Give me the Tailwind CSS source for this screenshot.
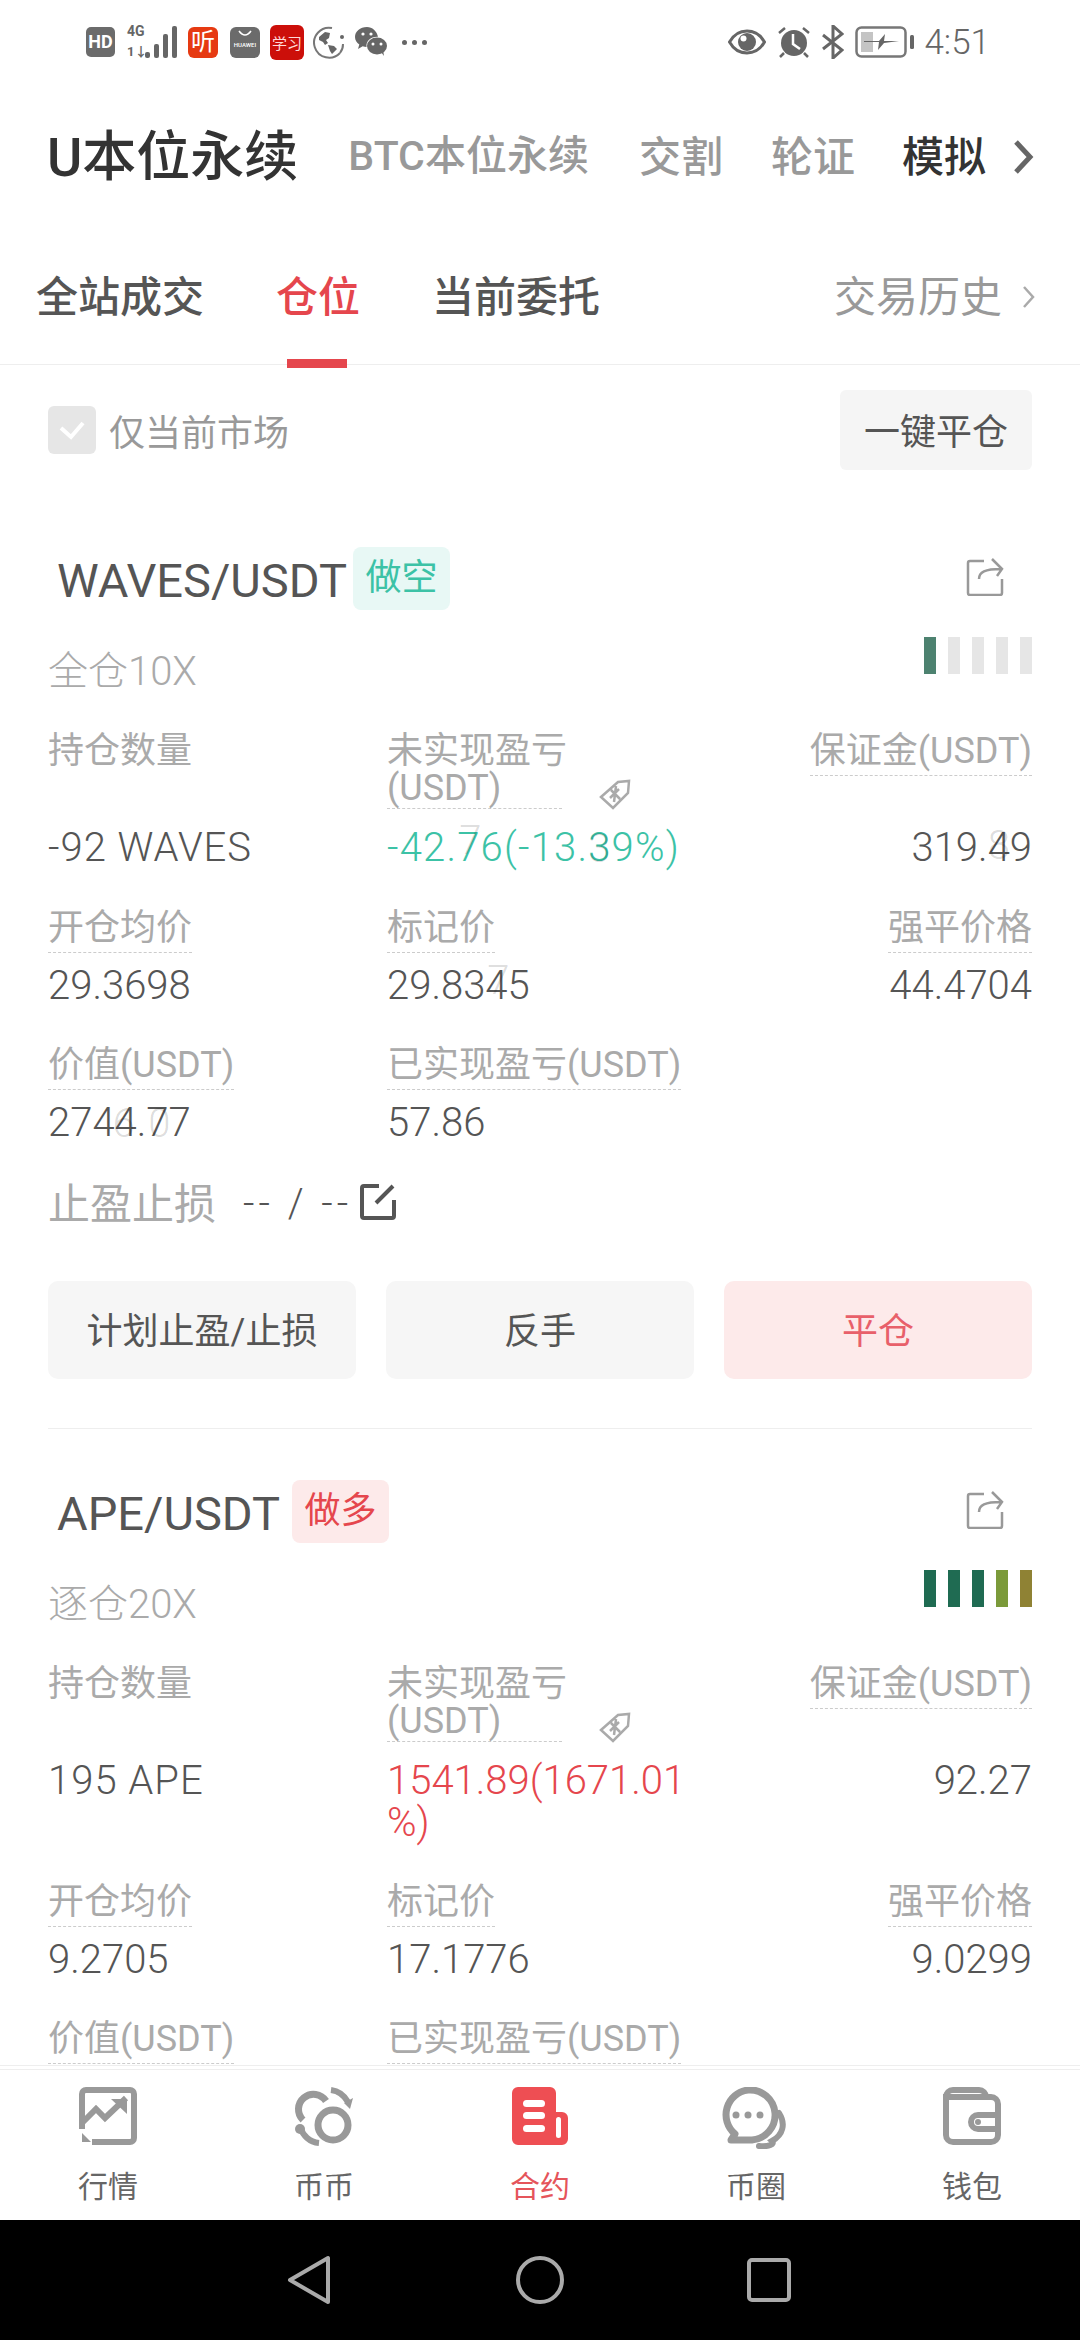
<!DOCTYPE html>
<html lang="zh-CN">
<head>
<meta charset="UTF-8">
<meta name="viewport" content="width=device-width, initial-scale=1.0">
<title>U本位永续</title>
<script src="https://cdn.jsdelivr.net/npm/@tailwindcss/browser@4"></script>
</head>
<body class="bg-white font-['Roboto','Noto_Sans_CJK_SC',sans-serif]">
<div class="w-[1080px] h-[2340px] flex flex-col overflow-hidden">

  <!-- status bar -->
  <div class="h-[84px] shrink-0 relative text-[#666]">
    <div class="flex items-center h-full pl-[86px]">
      <div class="w-[29px] h-[30px] rounded-[5px] bg-[#6b6b6b] text-white text-[18px] font-bold leading-[30px] text-center">HD</div>
      <div class="ml-[12px] flex items-end h-[32px] w-[50px] relative">
        <span class="absolute left-0 top-[-2px] text-[14px] font-bold leading-[15px] text-[#666]">4G</span>
        <span class="absolute left-0 bottom-[-1px] text-[13px] font-bold leading-[14px] text-[#666]">1↓</span>
        <svg class="absolute right-0 bottom-0" width="32" height="32" viewBox="0 0 32 32"><g fill="#666"><rect x="0" y="26" width="5" height="6" rx="2"/><rect x="9" y="18" width="5" height="14" rx="2"/><rect x="18" y="8" width="5" height="24" rx="2"/><rect x="27" y="0" width="5" height="32" rx="2"/></g></svg>
      </div>
      <div class="ml-[11px] w-[30px] h-[31px] rounded-[6px] bg-[#e63a12] text-white text-[24px] leading-[31px] text-center">听</div>
      <div class="ml-[12px] w-[30px] h-[31px] rounded-[6px] bg-[#6b6b6b] relative overflow-hidden">
        <svg class="absolute left-[8px] top-[3px]" width="14" height="8" viewBox="0 0 14 8"><path d="M1 1q6 8 12 0" fill="none" stroke="#fff" stroke-width="1.5"/></svg>
        <span class="absolute left-0 right-0 top-[14px] text-center text-[6px] leading-[8px] text-white font-medium">HUAWEI</span>
      </div>
      <div class="ml-[10px] w-[34px] h-[35px] rounded-[6px] bg-[#cc0f0a] text-[#ffd9d9] text-[15px] leading-[35px] text-center font-['Noto_Sans_CJK_SC']">学习</div>
      <svg class="ml-[9px]" width="32" height="33" viewBox="0 0 32 33">
        <path d="M27 27A15 15 0 1 1 19 2" fill="none" stroke="#777" stroke-width="2"/>
        <path d="M30 18a14 14 0 0 1-3 9" fill="none" stroke="#777" stroke-width="2"/>
        <path d="M6 11l6-5 5 1-1 5-3 2 2 3-3 2-2-3-4-2zM15 19l6 1 3 3-5 5-2-3z" fill="#666"/>
        <circle cx="29" cy="11" r="2" fill="#666"/>
      </svg>
      <svg class="ml-[10px]" width="32" height="30" viewBox="0 0 32 30">
        <path d="M12 0C5 0 0 4.500 0 10c0 3.200 1.700 5.800 4.300 7.600L3 22l4.700-2.700c1.300.4 2.500.6 3.800.6C11 14 15.500 9.500 23 9.800 21.700 4 17.300 0 12 0z" fill="#666"/>
        <ellipse cx="22" cy="19" rx="10" ry="8.500" fill="#666"/><path d="M26 25l3 4-1-6z" fill="#666"/>
        <circle cx="8" cy="7" r="1.600" fill="#fff"/><circle cx="16" cy="7" r="1.600" fill="#fff"/><circle cx="18" cy="17" r="1.500" fill="#fff"/><circle cx="26" cy="17" r="1.500" fill="#fff"/>
      </svg>
      <div class="ml-[15px] flex gap-[5px]"><i class="w-[5px] h-[5px] rounded-full bg-[#666]"></i><i class="w-[5px] h-[5px] rounded-full bg-[#666]"></i><i class="w-[5px] h-[5px] rounded-full bg-[#666]"></i></div>
    </div>
    <div class="absolute right-[90px] top-0 h-full flex items-center">
      <svg width="38" height="26" viewBox="0 0 38 26"><path d="M1.500 13C6 5 12 2 19 2s13 3 17.500 11C32 21 26 24 19 24S6 21 1.500 13z" fill="none" stroke="#666" stroke-width="3"/><circle cx="19" cy="13" r="9" fill="#666"/><circle cx="15.500" cy="9.500" r="3" fill="#fff"/></svg>
      <svg class="ml-[11px]" width="34" height="32" viewBox="0 0 34 32"><circle cx="17" cy="17" r="13" fill="#666"/><path d="M16 8v10l7 5" fill="none" stroke="#fff" stroke-width="2.500"/><path d="M2 7l6-5M32 7l-6-5M7 27l-4 4M27 27l4 4" stroke="#666" stroke-width="2.500"/></svg>
      <svg class="ml-[11px]" width="22" height="34" viewBox="0 0 22 34"><path d="M1 10l19 15-9 8V1l9 8L1 24" fill="none" stroke="#666" stroke-width="3"/></svg>
      <svg class="ml-[11px]" width="59" height="32" viewBox="0 0 59 32"><rect x="1.500" y="1.500" width="49" height="29" rx="5" fill="none" stroke="#777" stroke-width="2.500"/><rect x="6" y="6" width="12" height="20" fill="#c4c4c4"/><path d="M9 15h15l6-7-1 7h15l-15 2-6 7 1-8H9z" fill="#666"/><rect x="55" y="9" width="4" height="14" rx="1.500" fill="#666"/></svg>
      <span class="ml-[10px] text-[35px] leading-none font-light">4:51</span>
    </div>
  </div>

  <!-- market tabs -->
  <div class="h-[146px] shrink-0 flex items-center pl-[47px] relative">
    <span class="text-[54px] font-medium text-[#333]">U本位永续</span>
    <span class="ml-[50px] text-[41px] font-medium text-[#999]">BTC本位永续</span>
    <span class="ml-[50px] text-[42px] font-medium text-[#999]">交割</span>
    <span class="ml-[48px] text-[42px] font-medium text-[#999]">轮证</span>
    <span class="ml-[47px] text-[42px] font-medium text-[#333]">模拟</span>
    <svg class="absolute left-[1013px] top-[55px]" width="22" height="36" viewBox="0 0 22 36"><path d="M3 3l14 15L3 33" fill="none" stroke="#666" stroke-width="5"/></svg>
  </div>

  <!-- sub tabs -->
  <div class="h-[135px] shrink-0 border-b border-[#eee] flex items-center pl-[36px] relative">
    <span class="text-[42px] font-medium text-[#555]">全站成交</span>
    <span class="ml-[72px] text-[42px] font-medium text-[#e5464d] relative">仓位<i class="absolute left-[11px] bottom-[-39px] w-[60px] h-[9px] bg-[#e5464d]"></i></span>
    <span class="ml-[72px] text-[42px] font-medium text-[#555]">当前委托</span>
    <span class="absolute left-[834px] text-[42px] text-[#999]">交易历史</span>
    <svg class="absolute left-[1022px] top-[55px]" width="14" height="24" viewBox="0 0 14 24"><path d="M2 2l9 10-9 10" fill="none" stroke="#aaa" stroke-width="2.500"/></svg>
  </div>

  <!-- positions -->
  <div class="flex-1 min-h-0 overflow-hidden px-[48px]">
    <div class="flex items-center justify-between pt-[25px]">
      <div class="flex items-center">
        <div class="w-[48px] h-[48px] rounded-[6px] bg-[#e6e6e6] flex items-center justify-center">
          <svg width="28" height="20" viewBox="0 0 28 20"><path d="M3 8l10 9L25 3" fill="none" stroke="#fff" stroke-width="4"/></svg>
        </div>
        <span class="ml-[13px] text-[36px] text-[#999] translate-y-[4px]">仅当前市场</span>
      </div>
      <button class="w-[192px] h-[80px] rounded-[6px] bg-[#f5f5f5] text-[36px] text-[#555] pt-[6px]">一键平仓</button>
    </div>

    <!-- WAVES -->
    <div class="mt-[77px] h-[63px] flex items-center relative">
      <span class="ml-[9px] text-[47px] text-[#555] leading-none translate-y-[2px]">WAVES/USDT</span>
      <span class="absolute left-[305px] top-0 w-[97px] h-[63px] rounded-[8px] bg-[#e8f8f5] text-[#3cc2a6] text-[36px] leading-[63px] text-center">做空</span>
      <svg class="absolute left-[918px] top-[11px]" width="38" height="38" viewBox="0 0 38 38"><path d="M18 3H4a2 2 0 0 0-2 2v30a2 2 0 0 0 2 2h30a2 2 0 0 0 2-2V21M13 21c0-7 6-10 22-10M26 1l10 10-5 7" fill="none" stroke="#999" stroke-width="2.500"/></svg>
    </div>
    <div class="mt-[40px] h-[40px] flex items-center justify-between relative">
      <span class="text-[40px] text-[#aaa] leading-none font-light translate-y-[2px]">全仓10X</span>
      <div class="flex gap-[12px] absolute right-0 top-[-13px]"><i class="w-[12px] h-[37px] bg-[#4d8270]"></i><i class="w-[12px] h-[37px] bg-[#e6e6e6]"></i><i class="w-[12px] h-[37px] bg-[#e6e6e6]"></i><i class="w-[12px] h-[37px] bg-[#e6e6e6]"></i><i class="w-[12px] h-[37px] bg-[#e6e6e6]"></i></div>
    </div>

    <div class="mt-[43px] grid grid-cols-[339px_306px_1fr]">
      <div>
        <div class="h-[90px] text-[36px] leading-[37px] text-[#aaa]">持仓数量</div>
        <div class="h-[50px] text-[40px] leading-[50px] text-[#555] font-light tracking-[1px]">-92 WAVES</div>
      </div>
      <div class="relative">
        <div class="h-[90px]"><div class="w-[175px] whitespace-nowrap text-[36px] leading-[37px] text-[#aaa] border-b border-dashed border-[#ccc] pb-[1px]">未实现盈亏<br>(USDT)</div></div>
        <svg class="absolute left-[212px] top-[45px]" width="32" height="32" viewBox="0 0 32 32"><path d="M2 19L19 4l11-1-1 12-15 15zM12 12l9 9M20 11l-9 9M17 8l-2 16" fill="none" stroke="#aaa" stroke-width="2.500"/></svg>
        <div class="h-[50px] text-[40px] leading-[50px] text-[#3cc2a6] font-light whitespace-nowrap tracking-[1.2px]">-42.<span class="relative">7<i class="absolute not-italic left-[2px] top-[-8px] text-black/15">7</i></span>6(-13.<span class="relative">3<i class="absolute not-italic left-0 top-0 text-black/15">3</i></span>9%)</div>
      </div>
      <div class="flex flex-col items-end">
        <div class="h-[90px]"><div class="text-[36px] leading-[37px] text-[#aaa] border-b border-dashed border-[#ccc] pb-[5px]">保证金(USDT)</div></div>
        <div class="h-[50px] text-[40px] leading-[50px] text-[#555] font-light">319.<span class="relative">4<i class="absolute not-italic left-0 top-[-3px] text-black/15">8</i></span>9</div>
      </div>

      <div class="mt-[37px]">
        <div class="h-[51px]"><div class="w-fit text-[36px] leading-[37px] text-[#aaa] border-b border-dashed border-[#ccc] pb-[5px]">开仓均价</div></div>
        <div class="h-[50px] text-[40px] leading-[50px] text-[#555] font-light">29.3698</div>
      </div>
      <div class="mt-[37px]">
        <div class="h-[51px]"><div class="w-fit text-[36px] leading-[37px] text-[#aaa] border-b border-dashed border-[#ccc] pb-[5px]">标记价</div></div>
        <div class="h-[50px] text-[40px] leading-[50px] text-[#555] font-light">29.83<span class="relative">4<i class="absolute not-italic left-[2px] top-[-6px] text-black/15">7</i></span>5</div>
      </div>
      <div class="mt-[37px] flex flex-col items-end">
        <div class="h-[51px]"><div class="text-[36px] leading-[37px] text-[#aaa] border-b border-dashed border-[#ccc] pb-[5px]">强平价格</div></div>
        <div class="h-[50px] text-[40px] leading-[50px] text-[#555] font-light">44.4704</div>
      </div>

      <div class="mt-[36px]">
        <div class="h-[51px]"><div class="w-fit text-[36px] leading-[37px] text-[#aaa] border-b border-dashed border-[#ccc] pb-[5px]">价值(USDT)</div></div>
        <div class="h-[50px] text-[40px] leading-[50px] text-[#555] font-light">274<span class="relative">4<i class="absolute not-italic left-[-2px] top-0 text-black/15">6</i></span>.<span class="relative">7<i class="absolute not-italic left-[2px] top-0 text-black/15">0</i></span>7</div>
      </div>
      <div class="mt-[36px] col-span-2">
        <div class="h-[51px]"><div class="w-fit text-[36px] leading-[37px] text-[#aaa] border-b border-dashed border-[#ccc] pb-[5px]">已实现盈亏(USDT)</div></div>
        <div class="h-[50px] text-[40px] leading-[50px] text-[#555] font-light">57.86</div>
      </div>
    </div>

    <div class="mt-[31px] h-[50px] flex items-center">
      <span class="text-[42px] text-[#aaa]">止盈止损</span>
      <span class="ml-[27px] w-[103px] text-[40px] text-[#555] font-light whitespace-pre tracking-[4px]">-- / --</span>
      <svg class="ml-[14px] -translate-y-[3px]" width="37" height="37" viewBox="0 0 37 37"><path d="M19 3H4a2 2 0 0 0-2 2v28a2 2 0 0 0 2 2h28a2 2 0 0 0 2-2V17M16 20L33 3" fill="none" stroke="#555" stroke-width="4"/></svg>
    </div>

    <div class="mt-[52px] grid grid-cols-3 gap-[30px] text-[36px]">
      <button class="h-[98px] rounded-[10px] bg-[#f6f6f6] text-[#555] pt-[3px]">计划止盈/止损</button>
      <button class="h-[98px] rounded-[10px] bg-[#f6f6f6] text-[#555] pt-[3px]">反手</button>
      <button class="h-[98px] rounded-[10px] bg-[#fdeaea] text-[#e8606a] pt-[3px]">平仓</button>
    </div>
    <div class="mt-[49px] h-px bg-[#eee]"></div>

    <!-- APE -->
    <div class="mt-[51px] h-[63px] flex items-center relative">
      <span class="ml-[9px] text-[47px] text-[#555] leading-none translate-y-[2px]">APE/USDT</span>
      <span class="absolute left-[244px] top-0 w-[97px] h-[63px] rounded-[8px] bg-[#fdeaea] text-[#e5464d] text-[36px] leading-[63px] text-center">做多</span>
      <svg class="absolute left-[918px] top-[11px]" width="38" height="38" viewBox="0 0 38 38"><path d="M18 3H4a2 2 0 0 0-2 2v30a2 2 0 0 0 2 2h30a2 2 0 0 0 2-2V21M13 21c0-7 6-10 22-10M26 1l10 10-5 7" fill="none" stroke="#999" stroke-width="2.500"/></svg>
    </div>
    <div class="mt-[40px] h-[40px] flex items-center justify-between relative">
      <span class="text-[40px] text-[#aaa] leading-none font-light translate-y-[2px]">逐仓20X</span>
      <div class="flex gap-[12px] absolute right-0 top-[-13px]"><i class="w-[12px] h-[37px] bg-[#1f6b52]"></i><i class="w-[12px] h-[37px] bg-[#1f6b52]"></i><i class="w-[12px] h-[37px] bg-[#1f6b52]"></i><i class="w-[12px] h-[37px] bg-[#7b9a3a]"></i><i class="w-[12px] h-[37px] bg-[#8f8234]"></i></div>
    </div>

    <div class="mt-[43px] grid grid-cols-[339px_306px_1fr]">
      <div>
        <div class="h-[90px] text-[36px] leading-[37px] text-[#aaa]">持仓数量</div>
        <div class="h-[91px] text-[40px] leading-[50px] text-[#555] font-light tracking-[1px]">195 APE</div>
      </div>
      <div class="relative">
        <div class="h-[90px]"><div class="w-[175px] whitespace-nowrap text-[36px] leading-[37px] text-[#aaa] border-b border-dashed border-[#ccc] pb-[1px]">未实现盈亏<br>(USDT)</div></div>
        <svg class="absolute left-[212px] top-[45px]" width="32" height="32" viewBox="0 0 32 32"><path d="M2 19L19 4l11-1-1 12-15 15zM12 12l9 9M20 11l-9 9M17 8l-2 16" fill="none" stroke="#aaa" stroke-width="2.500"/></svg>
        <div class="h-[91px] text-[40px] leading-[42px] pt-[4px] text-[#e5464d] font-light whitespace-nowrap">1541.89(1671.01<br>%)</div>
      </div>
      <div class="flex flex-col items-end">
        <div class="h-[90px]"><div class="text-[36px] leading-[37px] text-[#aaa] border-b border-dashed border-[#ccc] pb-[5px]">保证金(USDT)</div></div>
        <div class="h-[91px] text-[40px] leading-[50px] text-[#555] font-light">92.27</div>
      </div>

      <div class="mt-[37px]">
        <div class="h-[51px]"><div class="w-fit text-[36px] leading-[37px] text-[#aaa] border-b border-dashed border-[#ccc] pb-[5px]">开仓均价</div></div>
        <div class="h-[50px] text-[40px] leading-[50px] text-[#555] font-light">9.2705</div>
      </div>
      <div class="mt-[37px]">
        <div class="h-[51px]"><div class="w-fit text-[36px] leading-[37px] text-[#aaa] border-b border-dashed border-[#ccc] pb-[5px]">标记价</div></div>
        <div class="h-[50px] text-[40px] leading-[50px] text-[#555] font-light">17.1776</div>
      </div>
      <div class="mt-[37px] flex flex-col items-end">
        <div class="h-[51px]"><div class="text-[36px] leading-[37px] text-[#aaa] border-b border-dashed border-[#ccc] pb-[5px]">强平价格</div></div>
        <div class="h-[50px] text-[40px] leading-[50px] text-[#555] font-light">9.0299</div>
      </div>

      <div class="mt-[36px]">
        <div class="h-[51px]"><div class="w-fit text-[36px] leading-[37px] text-[#aaa] border-b border-dashed border-[#ccc] pb-[5px]">价值(USDT)</div></div>
      </div>
      <div class="mt-[36px] col-span-2">
        <div class="h-[51px]"><div class="w-fit text-[36px] leading-[37px] text-[#aaa] border-b border-dashed border-[#ccc] pb-[5px]">已实现盈亏(USDT)</div></div>
      </div>
    </div>
  </div>

  <!-- bottom nav -->
  <div class="h-[155px] shrink-0 bg-white border-t border-[#eee] pt-[3px]">
    <div class="h-full border-t border-[#eee] grid grid-cols-5 text-[30px] text-[#666] leading-none text-center pt-[17px]">
      <div class="flex flex-col items-center">
        <svg width="58" height="58" viewBox="0 0 58 58"><path d="M3 42V7a4 4 0 0 1 4-4h44a4 4 0 0 1 4 4v44a4 4 0 0 1-4 4H13" fill="none" stroke="#999" stroke-width="6"/><path d="M4 35l13-13 9 9 21-20" fill="none" stroke="#999" stroke-width="6"/><path d="M32 12h16v15z" fill="#999"/><path d="M3 46v9h9z" fill="#999"/></svg>
        <span class="mt-[27px]">行情</span>
      </div>
      <div class="flex flex-col items-center">
        <svg width="60" height="60" viewBox="0 0 60 60"><circle cx="39" cy="38" r="15" fill="none" stroke="#999" stroke-width="7"/><path d="M9 33A15 15 0 1 1 32 14" fill="none" stroke="#999" stroke-width="7"/><path d="M37 3c8 1 13 5 17 12" fill="none" stroke="#999" stroke-width="6"/><path d="M50 16l9-5-3 11z" fill="#999"/><path d="M7 42c2 6 8 13 18 14" fill="none" stroke="#999" stroke-width="6"/><circle cx="6" cy="42" r="5" fill="#999"/></svg>
        <span class="mt-[25px]">币币</span>
      </div>
      <div class="flex flex-col items-center text-[#e5555b]">
        <svg width="56" height="58" viewBox="0 0 56 58"><path d="M6 0h32a6 6 0 0 1 6 6v19h6a6 6 0 0 1 6 6v21a6 6 0 0 1-6 6H6a6 6 0 0 1-6-6V6a6 6 0 0 1 6-6z" fill="#ee4e53"/><g fill="#fff"><rect x="11" y="13" width="22" height="7" rx="3.500"/><rect x="11" y="25" width="22" height="7" rx="3.500"/><rect x="11" y="38" width="22" height="7" rx="3.500"/><rect x="44" y="30" width="5" height="21" rx="2.500"/></g></svg>
        <span class="mt-[27px]">合约</span>
      </div>
      <div class="flex flex-col items-center">
        <svg class="-translate-x-[2px]" width="66" height="62" viewBox="0 0 66 62"><path d="M27 3a25 25 0 0 1 4 50H10l4-6A25 25 0 0 1 27 3z" fill="none" stroke="#999" stroke-width="7" stroke-linejoin="round"/><circle cx="15" cy="28" r="3.500" fill="#999"/><circle cx="27" cy="28" r="3.500" fill="#999"/><circle cx="39" cy="28" r="3.500" fill="#999"/><path d="M58 26c7 11 4 22-7 28 3 3-3 6-13 5" fill="none" stroke="#999" stroke-width="6" stroke-linecap="round"/></svg>
        <span class="mt-[23px]">币圈</span>
      </div>
      <div class="flex flex-col items-center">
        <svg width="58" height="58" viewBox="0 0 58 58"><path d="M3 10a7 7 0 0 1 7-7h26a7 7 0 0 1 7 7M3 10v38a7 7 0 0 0 7 7h38a7 7 0 0 0 7-7V17a7 7 0 0 0-7-7H3z" fill="none" stroke="#999" stroke-width="6"/><path d="M55 28H35a7 7 0 0 0 0 14h20" fill="none" stroke="#999" stroke-width="6"/><circle cx="35" cy="35" r="3" fill="#999"/></svg>
        <span class="mt-[27px]">钱包</span>
      </div>
    </div>
  </div>

  <!-- android nav -->
  <div class="h-[120px] shrink-0 bg-black relative flex items-center">
    <svg class="ml-[287px]" width="44" height="50" viewBox="0 0 44 50"><path d="M41 3v44L3 25z" fill="none" stroke="#aaa" stroke-width="4" stroke-linejoin="round"/></svg>
    <svg class="ml-[185px]" width="48" height="48" viewBox="0 0 48 48"><circle cx="24" cy="24" r="22" fill="none" stroke="#aaa" stroke-width="4"/></svg>
    <svg class="ml-[183px]" width="44" height="44" viewBox="0 0 44 44"><rect x="2" y="2" width="40" height="40" rx="3" fill="none" stroke="#aaa" stroke-width="4"/></svg>
  </div>
</div>
</body>
</html>
